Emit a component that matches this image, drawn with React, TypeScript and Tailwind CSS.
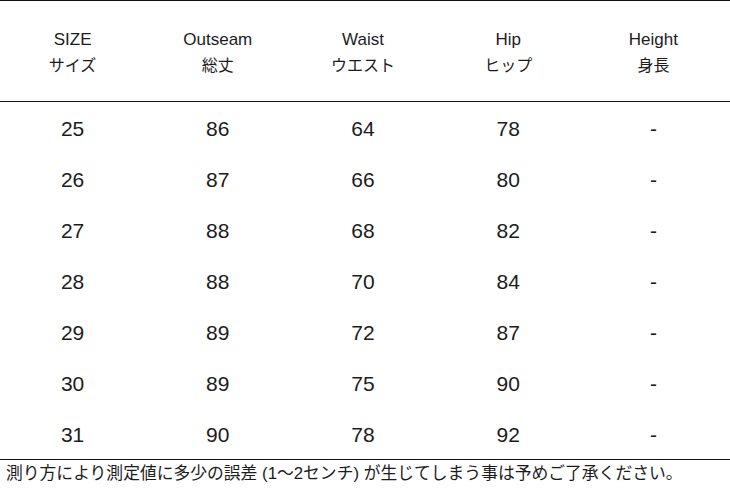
import React from 'react';

const headers = [
  { en: 'SIZE', ja: 'サイズ' },
  { en: 'Outseam', ja: '総丈' },
  { en: 'Waist', ja: 'ウエスト' },
  { en: 'Hip', ja: 'ヒップ' },
  { en: 'Height', ja: '身長' },
];

const rows = [
  ['25', '86', '64', '78', '-'],
  ['26', '87', '66', '80', '-'],
  ['27', '88', '68', '82', '-'],
  ['28', '88', '70', '84', '-'],
  ['29', '89', '72', '87', '-'],
  ['30', '89', '75', '90', '-'],
  ['31', '90', '78', '92', '-'],
];

export default function App() {
  return (
    <div
      className="w-[730px] h-[500px] bg-white text-[#1c1c1c] overflow-hidden"
      style={{ fontFamily: '"Liberation Sans", "Noto Sans CJK JP", sans-serif' }}
    >
      {/* Header */}
      <div className="border-t border-b border-[#111] h-[102px] grid grid-cols-5 pr-[4px] items-center">
        {headers.map((h) => (
          <div key={h.en} className="flex flex-col items-center pt-[3px]">
            <div className="text-[17px] leading-[26px]">{h.en}</div>
            <div className="text-[16px] leading-[26px]">{h.ja}</div>
          </div>
        ))}
      </div>

      {/* Rows */}
      <div className="border-b border-[#111]">
        {rows.map((r, i) => (
          <div key={i} className="grid grid-cols-5 pr-[4px] h-[51px] items-center pt-[2px]">
            {r.map((v, j) => (
              <div key={j} className="text-center text-[21px] leading-none">
                {v}
              </div>
            ))}
          </div>
        ))}
      </div>

      {/* Note */}
      <div className="pl-[6px] pt-[2px] text-[16.8px] leading-[24px]">
        測り方により測定値に多少の誤差 (1〜2センチ) が生じてしまう事は予めご了承ください。
      </div>
    </div>
  );
}
